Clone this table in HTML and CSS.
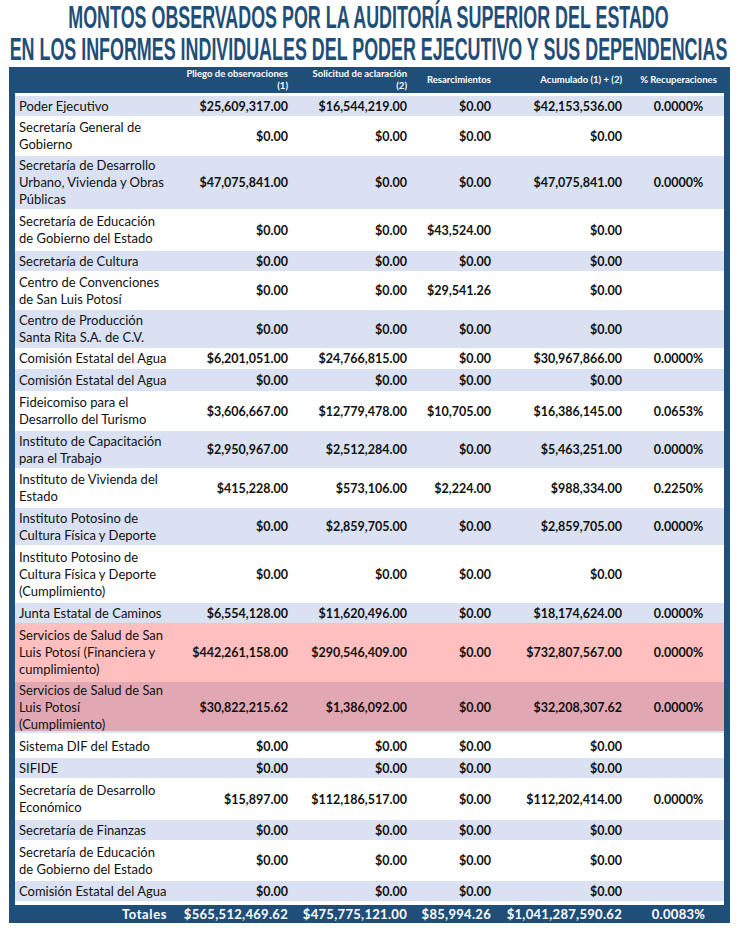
FILE: index.html
```html
<!DOCTYPE html>
<html lang="es">
<head>
<meta charset="utf-8">
<title>Montos observados</title>
<link rel="stylesheet" href="styles.css">
</head>
<body>
<header class="title">
  <div class="tline first"><span class="t1">MONTOS OBSERVADOS POR LA AUDITORÍA SUPERIOR DEL ESTADO</span></div>
  <div class="tline second"><span class="t2">EN LOS INFORMES INDIVIDUALES DEL PODER EJECUTIVO Y SUS DEPENDENCIAS</span></div>
</header>
<section class="frame">
  <div class="row head">
    <div></div>
    <div class="r">Pliego de observaciones<br>(1)</div>
    <div class="r">Solicitud de aclaración<br>(2)</div>
    <div class="r">Resarcimientos</div>
    <div class="r">Acumulado (1) + (2)</div>
    <div class="c">% Recuperaciones</div>
  </div>
  <div class="body">
    <div class="row blue h20"><div class="n">Poder Ejecutivo</div><div class="v">$25,609,317.00</div><div class="v">$16,544,219.00</div><div class="v">$0.00</div><div class="v">$42,153,536.00</div><div class="p">0.0000%</div></div>
    <div class="row h40"><div class="n">Secretaría General de<br>Gobierno</div><div class="v">$0.00</div><div class="v">$0.00</div><div class="v">$0.00</div><div class="v">$0.00</div><div class="p"></div></div>
    <div class="row blue h53"><div class="n">Secretaría de Desarrollo<br>Urbano, Vivienda y Obras<br>Públicas</div><div class="v">$47,075,841.00</div><div class="v">$0.00</div><div class="v">$0.00</div><div class="v">$47,075,841.00</div><div class="p">0.0000%</div></div>
    <div class="row h42"><div class="n">Secretaría de Educación<br>de Gobierno del Estado</div><div class="v">$0.00</div><div class="v">$0.00</div><div class="v">$43,524.00</div><div class="v">$0.00</div><div class="p"></div></div>
    <div class="row blue h20"><div class="n">Secretaría de Cultura</div><div class="v">$0.00</div><div class="v">$0.00</div><div class="v">$0.00</div><div class="v">$0.00</div><div class="p"></div></div>
    <div class="row h39"><div class="n">Centro de Convenciones<br>de San Luis Potosí</div><div class="v">$0.00</div><div class="v">$0.00</div><div class="v">$29,541.26</div><div class="v">$0.00</div><div class="p"></div></div>
    <div class="row blue h38"><div class="n">Centro de Producción<br>Santa Rita S.A. de C.V.</div><div class="v">$0.00</div><div class="v">$0.00</div><div class="v">$0.00</div><div class="v">$0.00</div><div class="p"></div></div>
    <div class="row h21"><div class="n">Comisión Estatal del Agua</div><div class="v">$6,201,051.00</div><div class="v">$24,766,815.00</div><div class="v">$0.00</div><div class="v">$30,967,866.00</div><div class="p">0.0000%</div></div>
    <div class="row blue h22"><div class="n">Comisión Estatal del Agua</div><div class="v">$0.00</div><div class="v">$0.00</div><div class="v">$0.00</div><div class="v">$0.00</div><div class="p"></div></div>
    <div class="row h40"><div class="n">Fideicomiso para el<br>Desarrollo del Turismo</div><div class="v">$3,606,667.00</div><div class="v">$12,779,478.00</div><div class="v">$10,705.00</div><div class="v">$16,386,145.00</div><div class="p">0.0653%</div></div>
    <div class="row blue h37"><div class="n">Instituto de Capacitación<br>para el Trabajo</div><div class="v">$2,950,967.00</div><div class="v">$2,512,284.00</div><div class="v">$0.00</div><div class="v">$5,463,251.00</div><div class="p">0.0000%</div></div>
    <div class="row h40"><div class="n">Instituto de Vivienda del<br>Estado</div><div class="v">$415,228.00</div><div class="v">$573,106.00</div><div class="v">$2,224.00</div><div class="v">$988,334.00</div><div class="p">0.2250%</div></div>
    <div class="row blue h37"><div class="n">Instituto Potosino de<br>Cultura Física y Deporte</div><div class="v">$0.00</div><div class="v">$2,859,705.00</div><div class="v">$0.00</div><div class="v">$2,859,705.00</div><div class="p">0.0000%</div></div>
    <div class="row h58"><div class="n">Instituto Potosino de<br>Cultura Física y Deporte<br>(Cumplimiento)</div><div class="v">$0.00</div><div class="v">$0.00</div><div class="v">$0.00</div><div class="v">$0.00</div><div class="p"></div></div>
    <div class="row blue h20"><div class="n">Junta Estatal de Caminos</div><div class="v">$6,554,128.00</div><div class="v">$11,620,496.00</div><div class="v">$0.00</div><div class="v">$18,174,624.00</div><div class="p">0.0000%</div></div>
    <div class="row pink h59"><div class="n">Servicios de Salud de San<br>Luis Potosí (Financiera y<br>cumplimiento)</div><div class="v">$442,261,158.00</div><div class="v">$290,546,409.00</div><div class="v">$0.00</div><div class="v">$732,807,567.00</div><div class="p">0.0000%</div></div>
    <div class="row rose h49"><div class="n">Servicios de Salud de San<br>Luis Potosí<br>(Cumplimiento)</div><div class="v">$30,822,215.62</div><div class="v">$1,386,092.00</div><div class="v">$0.00</div><div class="v">$32,208,307.62</div><div class="p">0.0000%</div></div>
    <div class="gap"></div>
    <div class="row h24"><div class="n">Sistema DIF del Estado</div><div class="v">$0.00</div><div class="v">$0.00</div><div class="v">$0.00</div><div class="v">$0.00</div><div class="p"></div></div>
    <div class="row blue h20"><div class="n">SIFIDE</div><div class="v">$0.00</div><div class="v">$0.00</div><div class="v">$0.00</div><div class="v">$0.00</div><div class="p"></div></div>
    <div class="row h42"><div class="n">Secretaría de Desarrollo<br>Económico</div><div class="v">$15,897.00</div><div class="v">$112,186,517.00</div><div class="v">$0.00</div><div class="v">$112,202,414.00</div><div class="p">0.0000%</div></div>
    <div class="row blue h20"><div class="n">Secretaría de Finanzas</div><div class="v">$0.00</div><div class="v">$0.00</div><div class="v">$0.00</div><div class="v">$0.00</div><div class="p"></div></div>
    <div class="row h41"><div class="n">Secretaría de Educación<br>de Gobierno del Estado</div><div class="v">$0.00</div><div class="v">$0.00</div><div class="v">$0.00</div><div class="v">$0.00</div><div class="p"></div></div>
    <div class="row blue h20"><div class="n">Comisión Estatal del Agua</div><div class="v">$0.00</div><div class="v">$0.00</div><div class="v">$0.00</div><div class="v">$0.00</div><div class="p"></div></div>
  </div>
  <div class="row totals">
    <div class="tl">Totales</div>
    <div class="v">$565,512,469.62</div>
    <div class="v">$475,775,121.00</div>
    <div class="v">$85,994.26</div>
    <div class="v">$1,041,287,590.62</div>
    <div class="p">0.0083%</div>
  </div>
</section>
</body>
</html>
```
FILE: styles.css
```css
html, body {
  margin: 0;
  padding: 0;
  background: #ffffff;
}
body {
  width: 737px;
  font-family: Lato, "Open Sans", sans-serif;
  color: #111;
}
.title {
  height: 67px;
  box-sizing: border-box;
  padding-top: 2px;
  color: #1f4e79;
  font-family: "Liberation Sans", Arial, sans-serif;
  font-weight: bold;
}
.tline {
  display: flex;
  justify-content: center;
  align-items: center;
  white-space: nowrap;
}
.tline.first { height: 33px; }
.tline.second { height: 32px; }
.tline span {
  display: inline-block;
  font-size: 17.9px;
  line-height: 1;
  transform-origin: center;
  transform: scaleY(1.78);
}

.frame {
  margin-left: 9px;
  width: 721px;
  background: #1f4e79;
  padding: 0 6px 0 6px;
  box-sizing: border-box;
}
.row {
  display: grid;
  grid-template-columns: 163px 113px 119px 84px 136px 94px;
  align-items: center;
}
.head {
  height: 26px;
  color: #fff;
  font-size: 9.5px;
  font-weight: bold;
  line-height: 12px;
}
.head .r { text-align: right; padding-right: 3px; }
.head div:nth-child(5) { padding-right: 8px; }
.head .c { text-align: center; padding-left: 3px; }

.body {
  background: #fff;
  padding: 3px 0 4px 0;
}
.body .row {
  font-size: 13px;
  line-height: 17px;
}
.body .v, .body .p {
  font-size: 12.5px;
}
.blue { background: #d9e1f2; }
.pink { background: #ffbfbf; }
.rose { background: #e1a8b4; }
.gap {
  height: 1px;
  border-top: 2px solid #d9e1f2;
}
.n {
  padding-left: 4px;
  white-space: nowrap;
}
.v {
  text-align: right;
  padding-right: 3px;
  font-weight: bold;
  white-space: nowrap;
}
.row .v:nth-child(5) { padding-right: 8px; }
.p {
  text-align: center;
  font-weight: bold;
  padding-left: 3px;
}
.h20 { height: 20px; }
.h21 { height: 21px; }
.h22 { height: 22px; }
.h24 { height: 24px; }
.h37 { height: 37px; }
.h38 { height: 38px; }
.h39 { height: 39px; }
.h40 { height: 40px; }
.h41 { height: 41px; }
.h42 { height: 42px; }
.h49 { height: 49px; }
.h53 { height: 53px; }
.h58 { height: 58px; }
.h59 { height: 59px; }

.totals {
  height: 18px;
  color: #fff;
  font-size: 13px;
  font-weight: bold;
  line-height: 18px;
  letter-spacing: 0.3px;
}
.totals .tl {
  text-align: right;
  padding-right: 11px;
  letter-spacing: 0.6px;
}
```
